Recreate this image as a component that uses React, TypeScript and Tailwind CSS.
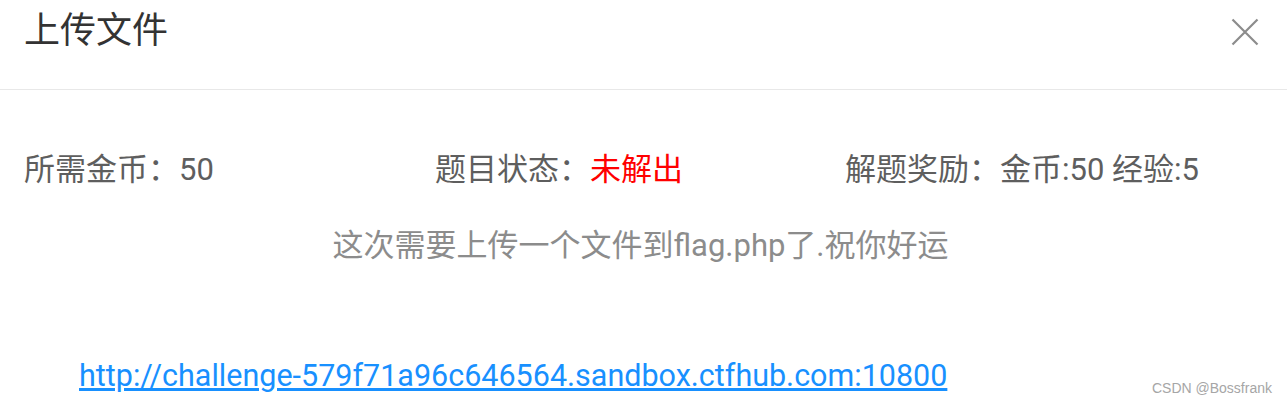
import React from "react";

export default function App() {
  const info = [
    { label: "所需金币：", value: "50", red: false },
    { label: "题目状态：", value: "未解出", red: true },
    { label: "解题奖励：", value: "金币:50 经验:5", red: false },
  ];

  return (
    <div
      className="relative w-[1287px] h-[407px] bg-white overflow-hidden"
      style={{ fontFamily: 'Roboto, "Noto Sans CJK SC", sans-serif' }}
    >
      {/* header */}
      <div className="flex items-center justify-between h-[90px] border-b border-[#e8e8e8] pl-[24px] pr-[28px]">
        <div className="text-[36px] leading-[40px] text-[#333] -mt-[27px]">上传文件</div>
        <button className="-mt-[26px]" aria-label="close">
          <svg width="28" height="28" viewBox="0 0 28 28" fill="none">
            <path d="M1.5 1.5 L26.5 26.5 M26.5 1.5 L1.5 26.5" stroke="#8c8c8c" strokeWidth="2.2" />
          </svg>
        </button>
      </div>

      {/* body */}
      <div className="px-[24px]">
        <div className="grid grid-cols-[411px_410px_1fr] mt-[60px] text-[31px] leading-[40px] text-[#5e5e5e]">
          {info.map((item, i) => (
            <div key={i} className="whitespace-nowrap">
              {item.label}
              <span className={item.red ? "text-[#ff0000]" : ""}>{item.value}</span>
            </div>
          ))}
        </div>
        <div className="mt-[36px] pr-[6px] text-center text-[31px] leading-[40px] text-[#8c8c8c]">
          这次需要上传一个文件到flag.php了.祝你好运
        </div>
        <div className="mt-[90px] pl-[55px] text-[30.5px] leading-[40px]">
          <a href="#" className="text-[#1890ff] underline">
            http://challenge-579f71a96c646564.sandbox.ctfhub.com:10800
          </a>
        </div>
      </div>

      {/* watermark */}
      <div
        className="absolute right-[15px] bottom-[8px] text-[14px] text-[#a6a6a6]"
        style={{ fontFamily: '"Liberation Sans", sans-serif' }}
      >
        CSDN @Bossfrank
      </div>
    </div>
  );
}
